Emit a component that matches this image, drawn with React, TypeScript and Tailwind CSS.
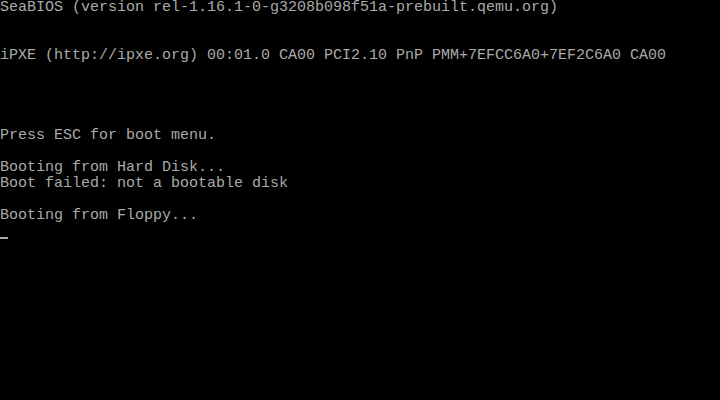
import React from "react";

const lines: string[] = [
  "SeaBIOS (version rel-1.16.1-0-g3208b098f51a-prebuilt.qemu.org)",
  "",
  "",
  "iPXE (http://ipxe.org) 00:01.0 CA00 PCI2.10 PnP PMM+7EFCC6A0+7EF2C6A0 CA00",
  "",
  "",
  "",
  "",
  "Press ESC for boot menu.",
  "",
  "Booting from Hard Disk...",
  "Boot failed: not a bootable disk",
  "",
  "Booting from Floppy...",
];

const App = () => {
  return (
    <div className="w-[720px] h-[400px] bg-black overflow-hidden text-[#aaaaaa] font-['Liberation_Mono',monospace] text-[15px] leading-4">
      {lines.map((line, i) => (
        <div key={i} className="h-4 whitespace-pre">
          {line}
        </div>
      ))}
      {/* blinking cursor row */}
      <div className="h-4 flex items-end pb-[1px]">
        <div className="w-[8px] h-[2px] bg-[#aaaaaa]"></div>
      </div>
    </div>
  );
};

export default App;
